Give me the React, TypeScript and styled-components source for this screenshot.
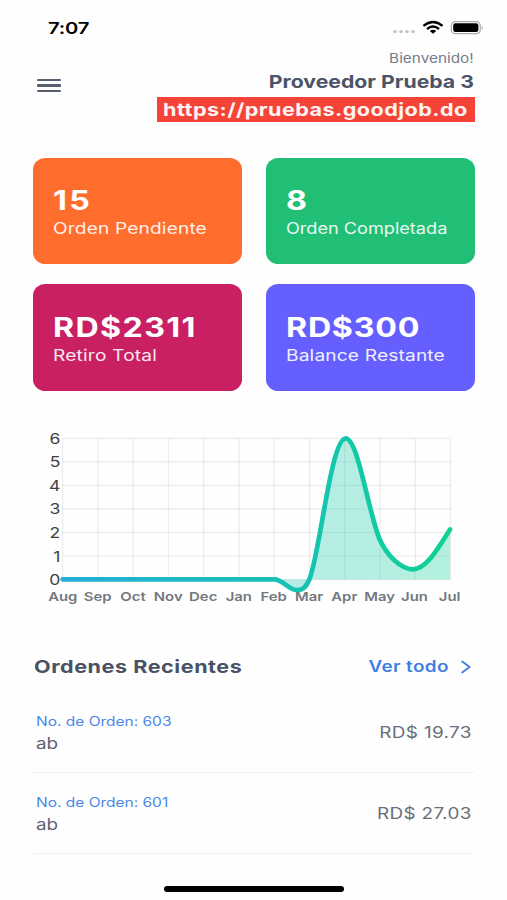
import React from "react";
import styled, { createGlobalStyle } from "styled-components";

const GlobalStyle = createGlobalStyle`
  body { margin: 0; background: #fefefe; font-family: Inter, "Liberation Sans", sans-serif; }
  *, *::before, *::after { box-sizing: border-box; }
`;

const Screen = styled.div`
  display: flex;
  flex-direction: column;
  width: 507px;
  height: 900px;
  overflow: hidden;
  background: #fefefe;
`;

const WideText = styled.span<{ $stretch?: number; $spacing?: number; $end?: boolean }>`
  display: inline-block;
  white-space: nowrap;
  letter-spacing: ${(p) => p.$spacing ?? 0}px;
  margin-right: ${(p) => (p.$end ? -(p.$spacing ?? 0) : 0)}px;
  transform: scaleX(${(p) => p.$stretch ?? 1.22});
  transform-origin: ${(p) => (p.$end ? "right" : "left")} center;
`;

const StatusBar = styled.div`
  display: flex;
  flex: none;
  align-items: center;
  justify-content: space-between;
  height: 48px;
  padding: 7px 23px 0 48px;
`;

const Clock = styled.div`
  font-size: 16.6px;
  font-weight: 600;
  line-height: 20px;
  color: #050505;
`;

const StatusIcons = styled.svg`
  display: block;
  width: 92px;
  height: 16px;
`;

const Header = styled.header`
  display: flex;
  flex: none;
  justify-content: space-between;
  height: 109.5px;
  padding: 0 32.5px 0 37px;
`;

const MenuButton = styled.button`
  display: flex;
  flex-direction: column;
  gap: 3.1px;
  width: 24px;
  height: 14px;
  margin: 31px 0 0;
  padding: 0;
  border: 0;
  background: none;
`;

const MenuBar = styled.span`
  height: 2.3px;
  flex: none;
  border-radius: 1px;
  background: #566071;
`;

const Greeting = styled.div`
  display: flex;
  flex-direction: column;
  align-items: flex-end;
`;

const Welcome = styled.div`
  padding-right: 1px;
  font-size: 13px;
  line-height: 20.4px;
  color: #777d8b;
`;

const ProviderName = styled.div`
  padding: 1px 0.8px 0 0;
  font-size: 17.7px;
  font-weight: 700;
  line-height: 26px;
  color: #4b5567;
`;

const SiteBadge = styled.div`
  width: 318px;
  height: 25.4px;
  margin-top: 1.4px;
  padding-right: 7.3px;
  font-size: 17.7px;
  font-weight: 700;
  line-height: 25.4px;
  text-align: right;
  color: #fff4f1;
  background: #f64338;
`;

const CardGrid = styled.section`
  display: grid;
  flex: none;
  grid-template-columns: 208.4px 208.4px;
  grid-auto-rows: 106.2px;
  gap: 20.8px 24.6px;
  padding: 0 33.3px;
`;

const Card = styled.article<{ $color: string }>`
  display: flex;
  flex-direction: column;
  padding: 26.4px 0 0 20px;
  border-radius: 12.5px / 11.5px;
  color: #fff;
  background: ${(p) => p.$color};
`;

const CardValue = styled.div`
  font-size: 26.4px;
  font-weight: 700;
  line-height: 32px;
`;

const CardLabel = styled.div`
  padding-top: 1px;
  font-size: 15.7px;
  line-height: 24.6px;
  opacity: 0.9;
`;

const Chart = styled.svg`
  display: block;
  flex: none;
  width: 507px;
  height: 190px;
  margin-top: 29.3px;
`;

const AxisText = styled.text`
  font-family: Inter, sans-serif;
  font-size: 14.6px;
  fill: #414144;
`;

const MonthText = styled.text`
  font-family: Inter, sans-serif;
  font-size: 12.2px;
  font-weight: 600;
  text-anchor: middle;
  fill: #72787e;
`;

const Orders = styled.section`
  display: flex;
  flex: none;
  flex-direction: column;
  padding: 42px 32px 0 33.3px;
`;

const OrdersHead = styled.div`
  display: flex;
  align-items: center;
  justify-content: space-between;
  height: 30px;
  margin-bottom: 10px;
  padding: 0 4.5px 0 0.8px;
`;

const OrdersTitle = styled.h2`
  margin: 0;
  font-size: 17.7px;
  font-weight: 700;
  line-height: 30px;
  color: #485264;
`;

const SeeAll = styled.a`
  display: flex;
  align-items: center;
  gap: 12px;
  font-size: 15.5px;
  font-weight: 600;
  line-height: 30px;
  color: #3f7fe4;
`;

const Chevron = styled.svg`
  display: block;
  width: 10px;
  height: 14px;
`;

const OrderRow = styled.div`
  display: flex;
  align-items: center;
  justify-content: space-between;
  height: 81.1px;
  padding: 2px 3.5px 0 2.7px;
  border-bottom: 1.6px solid #f1f1f3;
`;

const OrderInfo = styled.div`
  display: flex;
  flex-direction: column;
`;

const OrderNumber = styled.div`
  font-size: 12.8px;
  line-height: 22.4px;
  color: #4a86ea;
`;

const OrderName = styled.div`
  font-size: 15.7px;
  line-height: 22.4px;
  color: #5d6470;
`;

const OrderAmount = styled.div`
  font-size: 15.5px;
  line-height: 22px;
  color: #686e7c;
`;

const HomeIndicator = styled.div`
  flex: none;
  align-self: center;
  width: 180.5px;
  height: 5.6px;
  margin: auto 0 8.4px 1px;
  border-radius: 3px;
  background: #000;
`;

const cards = [
  { value: "15", label: "Orden Pendiente", color: "#ff6d2d", valueSpacing: 2, labelSpacing: 0.12, labelStretch: 1.22 },
  { value: "8", label: "Orden Completada", color: "#20bf75", valueSpacing: 0, labelSpacing: 0, labelStretch: 1.155 },
  { value: "RD$2311", label: "Retiro Total", color: "#c92064", valueSpacing: 1.1, labelSpacing: 0.15, labelStretch: 1.22 },
  { value: "RD$300", label: "Balance Restante", color: "#665fff", valueSpacing: 0.6, labelSpacing: 0.13, labelStretch: 1.22 },
];

const months = [
  { name: "Aug", x: 62.8 }, { name: "Sep", x: 97.6 }, { name: "Oct", x: 133 }, { name: "Nov", x: 168.2 },
  { name: "Dec", x: 203.2 }, { name: "Jan", x: 238.8 }, { name: "Feb", x: 273.7 }, { name: "Mar", x: 309 },
  { name: "Apr", x: 344.3 }, { name: "May", x: 379.6 }, { name: "Jun", x: 414.5 }, { name: "Jul", x: 449.6 },
];

const orders = [
  { id: 603, name: "ab", amount: "19.73" },
  { id: 601, name: "ab", amount: "27.03" },
];

const left = 62.6;
const right = 450.6;
const top = 18.4;
const stepX = (right - left) / 11;
const stepY = 23.52;
const curve =
  "H274 C283 159.3 288 170 297 170.2 C304 170.4 307 165 309.5 159 C320 133 331 18.3 345.7 18.3 " +
  "C358 18.3 368 91 379.5 119 C387 136 401 149.3 413 149.3 C426 149.3 437 130 450 109.5";

function StatusGlyphs() {
  return (
    <StatusIcons viewBox="0 0 92 16">
      <g fill="#c4c4c6">
        {[3, 9, 15, 21].map((x) => (
          <ellipse key={x} cx={x} cy="11.6" rx="2" ry="1.7" />
        ))}
      </g>
      <g fill="none" stroke="#000" strokeWidth="2.3">
        <path d="M31.4 5.9 Q41 -2 50.6 5.9" />
        <path d="M35 9 Q41 4 47 9" />
      </g>
      <path d="M37.8 11 Q41 8.7 44.2 11 L41 13.7 Z" fill="#000" />
      <rect x="59.3" y="1.7" width="29" height="12" rx="4" fill="#fff" stroke="#aaa" strokeWidth="1.2" />
      <rect x="61.2" y="3.3" width="25.2" height="8.8" rx="2.3" fill="#000" />
      <path d="M89.8 5.9 q2.2 1.9 0 3.8 Z" fill="#999" />
    </StatusIcons>
  );
}

function OrdersChart() {
  return (
    <Chart viewBox="0 0 507 190">
      <defs>
        <linearGradient id="line" gradientUnits="userSpaceOnUse" x1={left} y1="0" x2={right} y2="0">
          <stop offset="0" stopColor="#24add9" />
          <stop offset="0.5" stopColor="#18bfb9" />
          <stop offset="1" stopColor="#0ed295" />
        </linearGradient>
      </defs>
      <g stroke="#000" strokeOpacity="0.075" strokeWidth="1.2">
        {months.map((m, i) => (
          <line key={m.name} x1={left + i * stepX} x2={left + i * stepX} y1={top} y2={top + 6 * stepY} />
        ))}
        {[0, 1, 2, 3, 4, 5, 6].map((n) => (
          <line key={n} x1={left} x2={right} y1={top + n * stepY} y2={top + n * stepY} />
        ))}
      </g>
      <path d={`M${left} 159.3 ${curve} V159.5 H${left} Z`} fill="url(#line)" fillOpacity="0.31" />
      <path d={`M${left} 159.3 ${curve}`} fill="none" stroke="url(#line)" strokeWidth="4.7" strokeLinecap="round" strokeLinejoin="round" />
      {[6, 5, 4, 3, 2, 1, 0].map((n, i) => (
        <AxisText key={n} textAnchor="end" transform={`translate(60.3 ${top + 5.5 + i * stepY}) scale(1.2 1)`}>
          {n}
        </AxisText>
      ))}
      {months.map((m) => (
        <MonthText key={m.name} transform={`translate(${m.x} 180.8) scale(1.22 1)`}>
          {m.name}
        </MonthText>
      ))}
    </Chart>
  );
}

export default function App() {
  return (
    <Screen>
      <GlobalStyle />
      <StatusBar>
        <Clock><WideText $spacing={-0.15}>7:07</WideText></Clock>
        <StatusGlyphs />
      </StatusBar>
      <Header>
        <MenuButton aria-label="Menu">
          <MenuBar />
          <MenuBar />
          <MenuBar />
        </MenuButton>
        <Greeting>
          <Welcome><WideText $stretch={1.18} $end>Bienvenido!</WideText></Welcome>
          <ProviderName><WideText $stretch={1.2} $end>Proveedor Prueba 3</WideText></ProviderName>
          <SiteBadge><WideText $spacing={0.37} $end>https://pruebas.goodjob.do</WideText></SiteBadge>
        </Greeting>
      </Header>
      <CardGrid>
        {cards.map((c) => (
          <Card key={c.label} $color={c.color}>
            <CardValue><WideText $spacing={c.valueSpacing}>{c.value}</WideText></CardValue>
            <CardLabel><WideText $spacing={c.labelSpacing} $stretch={c.labelStretch}>{c.label}</WideText></CardLabel>
          </Card>
        ))}
      </CardGrid>
      <OrdersChart />
      <Orders>
        <OrdersHead>
          <OrdersTitle><WideText $spacing={0.45}>Ordenes Recientes</WideText></OrdersTitle>
          <SeeAll>
            <WideText $spacing={0.3} $end>Ver todo</WideText>
            <Chevron viewBox="0 0 10 14">
              <path d="M1.2 1.5 L8.6 7 L1.2 12.5" fill="none" stroke="#3f7fe4" strokeWidth="1.8" strokeLinecap="round" strokeLinejoin="round" />
            </Chevron>
          </SeeAll>
        </OrdersHead>
        {orders.map((o) => (
          <OrderRow key={o.id}>
            <OrderInfo>
              <OrderNumber><WideText $stretch={1.21}>No. de Orden: {o.id}</WideText></OrderNumber>
              <OrderName><WideText $stretch={1.2}>{o.name}</WideText></OrderName>
            </OrderInfo>
            <OrderAmount><WideText $spacing={0.28} $end>RD$ {o.amount}</WideText></OrderAmount>
          </OrderRow>
        ))}
      </Orders>
      <HomeIndicator />
    </Screen>
  );
}
